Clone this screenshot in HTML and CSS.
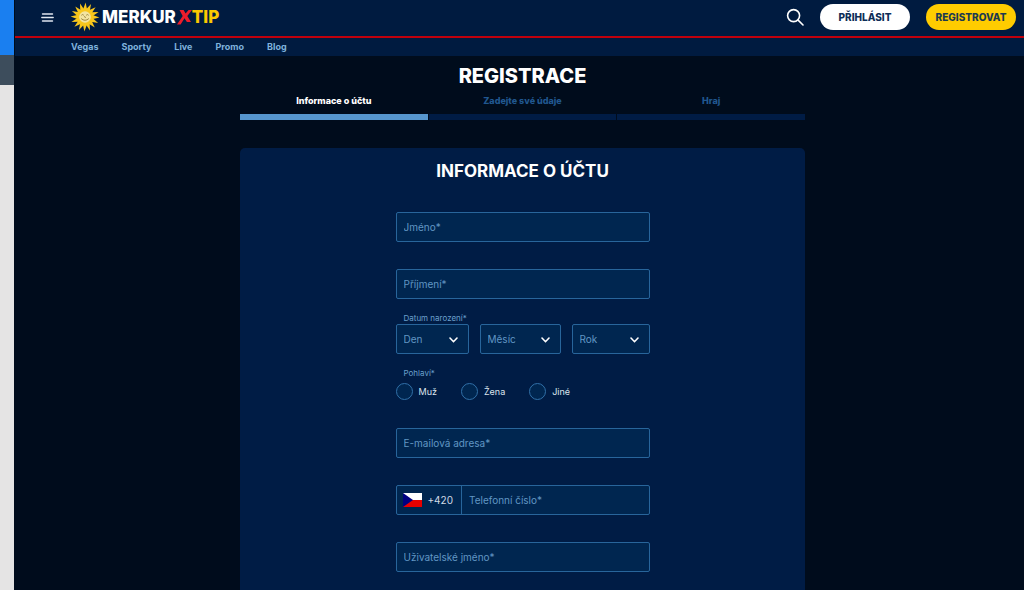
FILE: index.html
```html
<!DOCTYPE html>
<html lang="cs">
<head>
<meta charset="utf-8">
<meta name="viewport" content="width=device-width, initial-scale=1">
<title>Merkur XTIP – Registrace</title>
<link rel="stylesheet" href="styles.css">
</head>
<body>
<div class="side"><div class="side-blue"></div><div class="side-slate"></div></div>
<div class="app">
  <header class="header">
    <button class="menu" type="button" aria-label="Menu">
      <svg width="13" height="9" viewBox="0 0 13 9" stroke="#dfe6ef" stroke-width="1.4" stroke-linecap="round"><path d="M1.5 1H11.5M.8 4.5H12.2M1.5 8H11.5"/></svg>
    </button>
    <a class="logo" href="#">
      <svg class="sun" width="30" height="30" viewBox="-15 -15 30 30" aria-hidden="true">
        <defs>
          <g id="rays"><path id="ray" d="M-2.2 -7L.6 -14.4L2.2 -7Z"/><use href="#ray" transform="rotate(90)"/><use href="#ray" transform="rotate(180)"/><use href="#ray" transform="rotate(270)"/></g>
        </defs>
        <g fill="#f7c61c"><use href="#rays"/><use href="#rays" transform="rotate(22.5)"/><use href="#rays" transform="rotate(45)"/><use href="#rays" transform="rotate(67.5)"/><circle r="8.4"/></g>
        <circle r="5.8" fill="#f3e4a0"/>
        <g fill="none" stroke="#8b7430" stroke-width=".8" stroke-linecap="round"><path d="M-3.4 -2Q-2.4 -3.2 -1.4 -2M1.4 -2Q2.4 -3.2 3.4 -2M-3.6 1.8Q0 5 3.6 1.8M-.4 -.6L.4 .7"/></g>
      </svg>
      <span class="word">MERKUR</span><svg class="cross" width="15" height="16" viewBox="0 0 15 16" aria-label="X"><path fill="#ed1c2b" d="M2.5 1H6.6L8.6 4.6L11.6 1H15L10.3 7L14 13H9.9L7.5 9.2L3.6 15.4H0L5.7 7Z"/></svg><span class="tip">TIP</span>
    </a>
    <button class="search" type="button" aria-label="Hledat">
      <svg width="18" height="18" viewBox="0 0 18 18" fill="none" stroke="#fff" stroke-width="1.6" stroke-linecap="round"><circle cx="7.6" cy="7.6" r="6"/><path d="M12.1 12.1L17 17"/></svg>
    </button>
    <button class="pill" type="button">PŘIHLÁSIT</button>
    <button class="pill pill-yellow" type="button">REGISTROVAT</button>
  </header>
  <nav class="nav"><a href="#">Vegas</a><a href="#">Sporty</a><a href="#">Live</a><a href="#">Promo</a><a href="#">Blog</a></nav>
  <main class="main">
    <h1 class="title">REGISTRACE</h1>
    <ol class="steps">
      <li class="step step-active">Informace o účtu</li>
      <li class="step">Zadejte své údaje</li>
      <li class="step">Hraj</li>
    </ol>
    <section class="card">
      <h2 class="card-title">INFORMACE O ÚČTU</h2>
      <form class="form">
        <input class="field" type="text" placeholder="Jméno*" aria-label="Jméno">
        <input class="field" type="text" placeholder="Příjmení*" aria-label="Příjmení">
        <fieldset class="group">
          <legend class="legend">Datum narození*</legend>
          <div class="dates">
            <div class="pick"><select class="field" aria-label="Den"><option>Den</option></select><svg class="chevron" width="9" height="6" viewBox="0 0 9 6"><path d="M1 1L4.5 4.7L8 1"/></svg></div>
            <div class="pick pick-month"><select class="field" aria-label="Měsíc"><option>Měsíc</option></select><svg class="chevron" width="9" height="6" viewBox="0 0 9 6"><path d="M1 1L4.5 4.7L8 1"/></svg></div>
            <div class="pick pick-year"><select class="field" aria-label="Rok"><option>Rok</option></select><svg class="chevron" width="9" height="6" viewBox="0 0 9 6"><path d="M1 1L4.5 4.7L8 1"/></svg></div>
          </div>
        </fieldset>
        <fieldset class="group gender">
          <legend class="legend">Pohlaví*</legend>
          <div class="radios">
            <label class="option"><input class="radio" type="radio" name="sex">Muž</label>
            <label class="option"><input class="radio" type="radio" name="sex">Žena</label>
            <label class="option"><input class="radio" type="radio" name="sex">Jiné</label>
          </div>
        </fieldset>
        <input class="field" type="email" placeholder="E-mailová adresa*" aria-label="E-mailová adresa">
        <div class="phone">
          <div class="prefix">
            <svg width="19" height="14" viewBox="0 0 19 14" aria-hidden="true"><path fill="#fff" d="M0 0H19V7H0Z"/><path fill="#e80000" d="M0 7H19V14H0Z"/><path fill="#000080" d="M0 0L10 7L0 14Z"/></svg>
            <span>+420</span>
          </div>
          <input class="phone-input" type="tel" placeholder="Telefonní číslo*" aria-label="Telefonní číslo">
        </div>
        <input class="field" type="text" placeholder="Uživatelské jméno*" aria-label="Uživatelské jméno">
      </form>
    </section>
  </main>
</div>
</body>
</html>
```
FILE: styles.css
```css
* { box-sizing: border-box; }
body {
  margin: 0;
  height: 100vh;
  display: flex;
  overflow: hidden;
  background: #000c1c;
  color: #fff;
  font-family: Inter, "Noto Sans", sans-serif;
  font-size: 10px;
}
button, input, select { font: inherit; }
button { border: 0; padding: 0; background: none; color: inherit; cursor: pointer; }
a { text-decoration: none; color: inherit; }
svg { display: block; flex: none; }

.side { flex: none; width: 14px; background: #e5e4e4; }
.side-blue { height: 55px; background: #1a7ff0; }
.side-slate { height: 30px; background: #3d4d5c; }

.app { flex: 1; min-width: 0; margin-left: 1px; }
.header {
  display: flex;
  align-items: center;
  height: 38px;
  padding: 0 8px 2px 26px;
  background: #001b40;
  border-bottom: 2px solid #c0000c;
}
.logo { display: flex; align-items: center; margin-left: 16px; font-size: 17px; font-weight: 800; line-height: 20px; }
.word { margin-left: 2px; }
.cross { margin-left: 1px; }
.tip { color: #fbc800; }
.search { margin-left: auto; }
.pill {
  width: 90px;
  height: 26px;
  margin-left: 16px;
  border-radius: 13px;
  background: #fff;
  color: #0d2d57;
  font-weight: 800;
}
.pill-yellow { background: #fc0; color: #1c3a50; }
.nav {
  display: flex;
  gap: 23px;
  height: 18px;
  padding-left: 56px;
  background: #001b40;
  color: #7fb2dc;
  font-size: 9px;
  font-weight: 700;
  line-height: 18px;
}

.main { max-width: 571px; margin: 0 auto; padding-left: 6px; }
.title { margin: 0; padding-top: 8px; font-size: 20px; line-height: 24px; font-weight: 800; text-align: center; }
.steps {
  display: grid;
  grid-template-columns: repeat(3, 1fr);
  gap: 1px;
  margin: 6px 0 28px;
  padding: 0;
  list-style: none;
  color: #20578f;
  font-size: 9px;
  font-weight: 800;
  line-height: 14px;
  text-align: center;
}
.step { padding-bottom: 6px; border-bottom: 6px solid #001c45; }
.step-active { color: #fff; border-color: #5696ce; }

.card { padding: 12px 16px 32px; border-radius: 5px; background: #001c45; }
.card-title { margin: 0 0 30px; font-size: 17px; line-height: 22px; font-weight: 700; text-align: center; }
.form { display: flex; flex-direction: column; gap: 27px; max-width: 254px; margin: 0 auto; }
.field {
  width: 100%;
  height: 30px;
  padding: 0 7px;
  border: 1px solid #28659b;
  border-radius: 2px;
  background: #002650;
  color: #6096c4;
  appearance: none;
}
::placeholder { color: #6096c4; opacity: 1; }
.group { min-width: 0; margin: -13px 0 0; padding: 0; border: 0; }
.gender { margin-bottom: 1px; }
.legend { padding: 0 8px; font-size: 8px; line-height: 11px; color: #6ba0cc; }
.dates { display: flex; gap: 11px; }
.pick { position: relative; flex: 73; }
.pick-month { flex: 81; }
.pick-year { flex: 78; }
.chevron {
  position: absolute;
  right: 11px;
  top: 13px;
  fill: none;
  stroke: #fff;
  stroke-width: 1.6;
  stroke-linecap: round;
  pointer-events: none;
}
.radios { display: flex; gap: 24px; padding-top: 4px; }
.option { display: flex; align-items: center; gap: 6px; font-size: 9px; color: #dce5ee; }
.radio {
  width: 17px;
  height: 17px;
  margin: 0;
  border: 1px solid #3070a8;
  border-radius: 50%;
  background: #002650;
  appearance: none;
}
.radio:checked { background: #5696ce; }
.phone {
  display: flex;
  height: 30px;
  border: 1px solid #28659b;
  border-radius: 2px;
  background: #002650;
}
.prefix { display: flex; align-items: center; gap: 6px; padding: 0 8px 0 6px; border-right: 1px solid #28659b; color: #d0dae6; }
.phone-input { flex: 1; min-width: 0; padding: 0 7px; border: 0; background: none; color: #6096c4; }
```
